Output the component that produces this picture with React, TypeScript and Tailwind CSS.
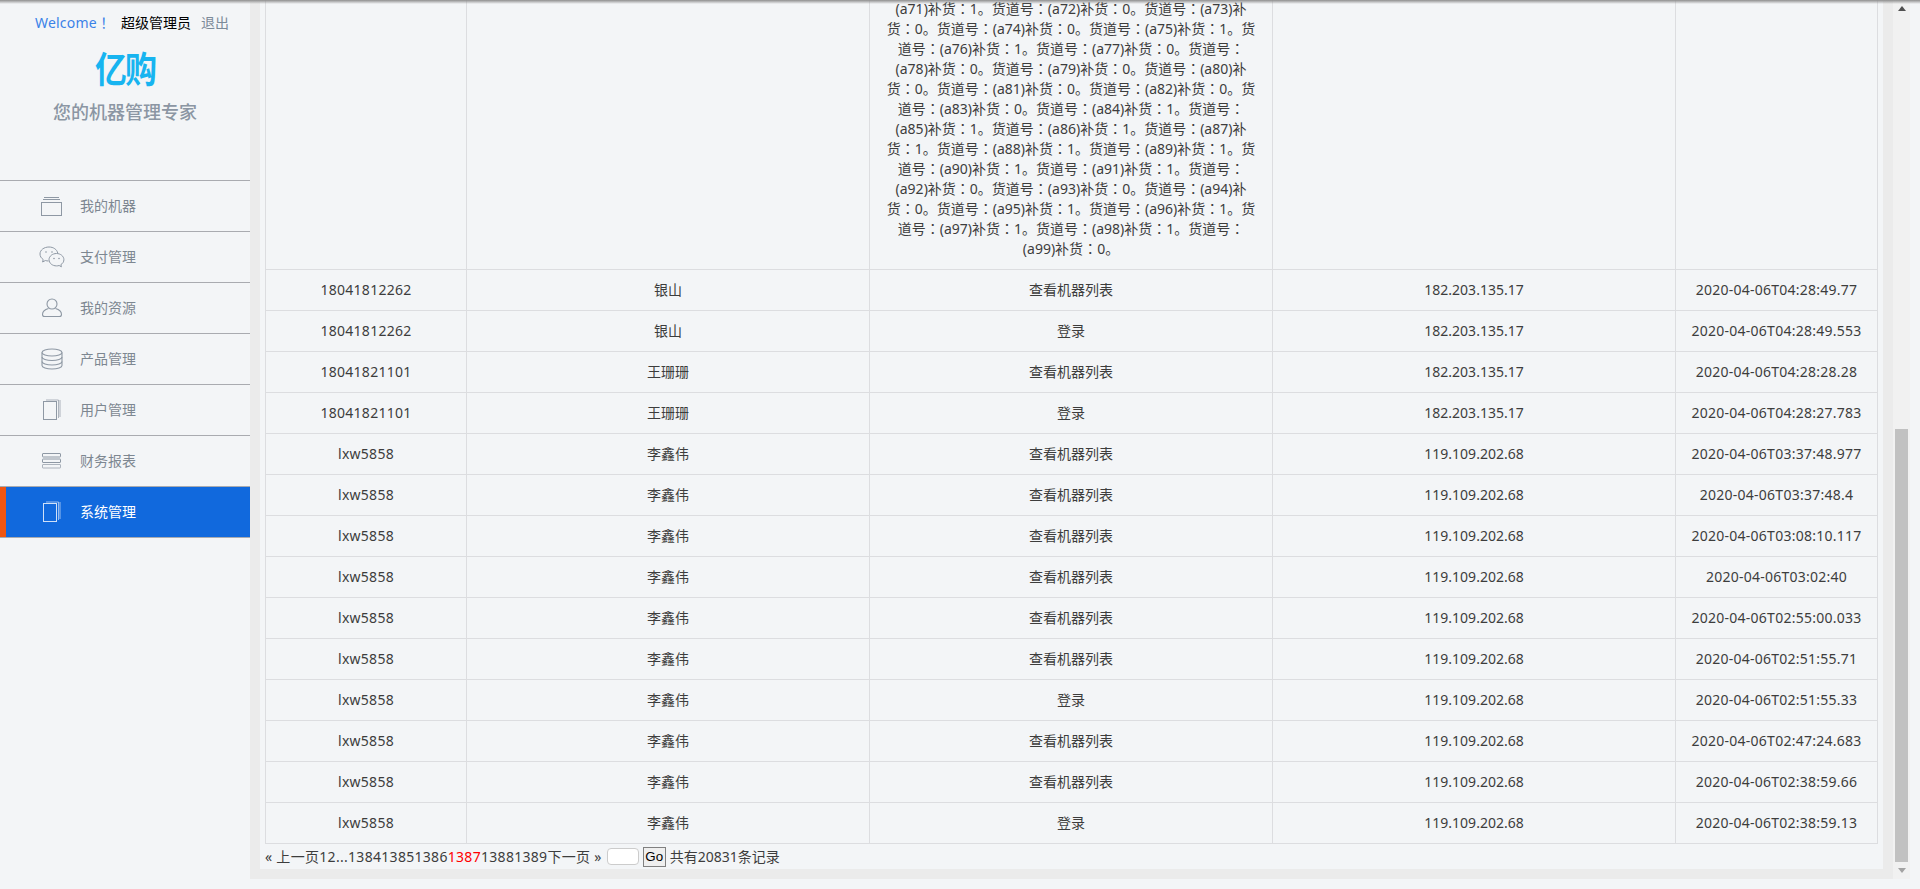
import React from "react";

const font = { fontFamily: '"Noto Sans", "Noto Sans CJK SC", sans-serif' };
const tc = { fontFamily: '"Noto Sans CJK TC", sans-serif' };

const bigLines = [
  "(a71)补货：1。货道号：(a72)补货：0。货道号：(a73)补",
  "货：0。货道号：(a74)补货：0。货道号：(a75)补货：1。货",
  "道号：(a76)补货：1。货道号：(a77)补货：0。货道号：",
  "(a78)补货：0。货道号：(a79)补货：0。货道号：(a80)补",
  "货：0。货道号：(a81)补货：0。货道号：(a82)补货：0。货",
  "道号：(a83)补货：0。货道号：(a84)补货：1。货道号：",
  "(a85)补货：1。货道号：(a86)补货：1。货道号：(a87)补",
  "货：1。货道号：(a88)补货：1。货道号：(a89)补货：1。货",
  "道号：(a90)补货：1。货道号：(a91)补货：1。货道号：",
  "(a92)补货：0。货道号：(a93)补货：0。货道号：(a94)补",
  "货：0。货道号：(a95)补货：1。货道号：(a96)补货：1。货",
  "道号：(a97)补货：1。货道号：(a98)补货：1。货道号：",
  "(a99)补货：0。",
];

const rows = [
  ["18041812262", "银山", "查看机器列表", "182.203.135.17", "2020-04-06T04:28:49.77"],
  ["18041812262", "银山", "登录", "182.203.135.17", "2020-04-06T04:28:49.553"],
  ["18041821101", "王珊珊", "查看机器列表", "182.203.135.17", "2020-04-06T04:28:28.28"],
  ["18041821101", "王珊珊", "登录", "182.203.135.17", "2020-04-06T04:28:27.783"],
  ["lxw5858", "李鑫伟", "查看机器列表", "119.109.202.68", "2020-04-06T03:37:48.977"],
  ["lxw5858", "李鑫伟", "查看机器列表", "119.109.202.68", "2020-04-06T03:37:48.4"],
  ["lxw5858", "李鑫伟", "查看机器列表", "119.109.202.68", "2020-04-06T03:08:10.117"],
  ["lxw5858", "李鑫伟", "查看机器列表", "119.109.202.68", "2020-04-06T03:02:40"],
  ["lxw5858", "李鑫伟", "查看机器列表", "119.109.202.68", "2020-04-06T02:55:00.033"],
  ["lxw5858", "李鑫伟", "查看机器列表", "119.109.202.68", "2020-04-06T02:51:55.71"],
  ["lxw5858", "李鑫伟", "登录", "119.109.202.68", "2020-04-06T02:51:55.33"],
  ["lxw5858", "李鑫伟", "查看机器列表", "119.109.202.68", "2020-04-06T02:47:24.683"],
  ["lxw5858", "李鑫伟", "查看机器列表", "119.109.202.68", "2020-04-06T02:38:59.66"],
  ["lxw5858", "李鑫伟", "登录", "119.109.202.68", "2020-04-06T02:38:59.13"],
];

type IconProps = { c: string };

const IconMachine = ({ c }: IconProps) => (
  <svg width="22" height="20" viewBox="0 0 22 20" fill="none" stroke={c} strokeWidth="1">
    <rect x="0.5" y="6.5" width="20" height="13" />
    <path d="M2 3.5h17M3 1.500h15" />
  </svg>
);
const IconWechat = ({ c }: IconProps) => (
  <svg width="26" height="22" viewBox="0 0 26 22" fill="none" stroke={c} strokeWidth="1">
    <path d="M10 1C5 1 1 4 1 8c0 2.300 1.300 4.200 3.200 5.500L3.600 16l2.800-1.500c1 .3 2 .5 3 .5" />
    <path d="M10 1c4.400 0 8 2.500 8.700 6" />
    <path d="M17.500 7.500c-4 0-7.500 2.700-7.500 6.200s3.500 6.200 7.500 6.200c1 0 1.800-.1 2.600-.4l2.300 1.300-.5-2.200c1.900-1.100 3-2.900 3-4.900 0-3.500-3.400-6.200-7.400-6.200z" />
    <circle cx="7" cy="6" r="0.8" fill={c} stroke="none" />
    <circle cx="13" cy="6" r="0.8" fill={c} stroke="none" />
    <circle cx="15" cy="12.500" r="0.8" fill={c} stroke="none" />
    <circle cx="20" cy="12.500" r="0.8" fill={c} stroke="none" />
  </svg>
);
const IconUser = ({ c }: IconProps) => (
  <svg width="22" height="20" viewBox="0 0 22 20" fill="none" stroke={c} strokeWidth="1.100">
    <circle cx="11" cy="6" r="5" />
    <path d="M7.500 10.500C4 11.500 1.500 13 1.500 16.500c0 1.500.5 2 2 2h15c1.500 0 2-.5 2-2 0-3.500-2.500-5-6-6" />
  </svg>
);
const IconDb = ({ c }: IconProps) => (
  <svg width="22" height="22" viewBox="0 0 22 22" fill="none" stroke={c} strokeWidth="1.100">
    <ellipse cx="11" cy="4.500" rx="10" ry="3.500" />
    <path d="M1 4.500v13c0 2 4.500 3.500 10 3.500s10-1.500 10-3.500v-13" />
    <path d="M1 9c0 2 4.500 3.500 10 3.500S21 11 21 9M1 13.500c0 2 4.500 3.500 10 3.500s10-1.500 10-3.500" />
  </svg>
);
const IconPages = ({ c }: IconProps) => (
  <svg width="18" height="22" viewBox="0 0 18 22" fill="none" stroke={c} strokeWidth="1">
    <rect x="0.500" y="2.500" width="13" height="18" />
    <path d="M3 1h12.500v18M17 1v17" opacity="0.7" />
  </svg>
);
const IconList = ({ c }: IconProps) => (
  <svg width="20" height="16" viewBox="0 0 20 16" fill="none" stroke={c} strokeWidth="1">
    <rect x="0.500" y="0.500" width="18" height="3.500" rx="0.500" />
    <rect x="0.500" y="6" width="18" height="3.500" rx="0.500" />
    <rect x="0.500" y="11.500" width="18" height="3.500" rx="0.500" opacity="0.7" />
  </svg>
);

const nav = [
  { label: "我的机器", Icon: IconMachine },
  { label: "支付管理", Icon: IconWechat },
  { label: "我的资源", Icon: IconUser },
  { label: "产品管理", Icon: IconDb },
  { label: "用户管理", Icon: IconPages },
  { label: "财务报表", Icon: IconList },
  { label: "系统管理", Icon: IconPages, active: true },
];

function Line({ text }: { text: string }) {
  const parts = text.split("：");
  return (
    <div className="h-[20px] whitespace-nowrap">
      {parts.map((p, i) => (
        <React.Fragment key={i}>
          {p}
          {i < parts.length - 1 && <span className="leading-[0]" style={tc}>：</span>}
        </React.Fragment>
      ))}
    </div>
  );
}

const cell = "border border-[#dcdde0] p-[10px] whitespace-nowrap";
const cellWide = "border border-[#dcdde0] p-[10px] whitespace-nowrap tracking-[0.25px]";

export default function App() {
  return (
    <div
      className="relative flex h-[889px] w-[1920px] overflow-hidden bg-[#f3f5f7] text-[14px] leading-[20px] text-[#3d3d3d]"
      style={font}
    >
      <div className="pointer-events-none absolute left-0 right-0 top-0 z-10 h-[4px] bg-gradient-to-b from-[#8f8f8f] to-transparent" />

      <aside className="flex w-[250px] shrink-0 flex-col">
        <div className="flex h-[180px] flex-col items-center">
          <div className="mt-[13px] flex h-[20px] w-full items-center pl-[35px]">
            <span className="tracking-[0.2px] text-[#3b82e8]">
              Welcome<span className="leading-[0]" style={tc}>！</span>
            </span>
            <span className="ml-[10px] text-black">超级管理员</span>
            <span className="ml-[10px] text-[#7c8a99]">退出</span>
          </div>
          <div className="mt-[17px] h-[40px] origin-center scale-y-[1.12] text-[32px] font-bold leading-[40px] tracking-[-2px] text-[#17b4f0]">亿购</div>
          <div className="mt-[10px] h-[24px] text-[18px] font-medium leading-[24px] text-[#8b96a3]">您的机器管理专家</div>
        </div>
        {nav.map(({ label, Icon, active }) => (
          <div
            key={label}
            className={
              active
                ? "flex h-[51px] items-center border-t border-[#a9abb0] bg-[#1169dd] text-white"
                : "flex h-[51px] items-center border-t border-[#a9abb0] text-[#7d8791]"
            }
          >
            <div className={active ? "h-full w-[6px] bg-[#ef5612]" : "h-full w-[6px]"} />
            <div className="flex w-[74px] justify-center pl-[18px]">
              <Icon c={active ? "#cfe0f8" : "#8e98a4"} />
            </div>
            <span>{label}</span>
          </div>
        ))}
        <div className="border-t border-[#a9abb0]" />
      </aside>

      <main className="flex min-w-0 flex-1 pb-[10px] pr-[10px]">
        <div className="flex min-w-0 flex-1 flex-col bg-[#ebebeb] px-[10px] pb-[10px]">
          <div className="flex min-h-0 flex-1 flex-col justify-end overflow-hidden bg-[#f3f5f7] pl-[5px] pr-[6px]">
            <table className="w-[1612px] shrink-0 table-fixed border-collapse text-center">
              <colgroup>
                <col className="w-[201px]" />
                <col className="w-[403px]" />
                <col className="w-[403px]" />
                <col className="w-[403px]" />
                <col className="w-[202px]" />
              </colgroup>
              <tbody>
                <tr>
                  <td className={cell} />
                  <td className={cell} />
                  <td className={cell}>
                    {bigLines.map((l) => (
                      <Line key={l} text={l} />
                    ))}
                  </td>
                  <td className={cell} />
                  <td className={cell} />
                </tr>
                {rows.map((r, i) => (
                  <tr key={i}>
                    {r.map((c, j) => (
                      <td key={j} className={j === 0 || j === 4 ? cellWide : cell}>{c}</td>
                    ))}
                  </tr>
                ))}
              </tbody>
            </table>
            <div className="flex h-[25px] shrink-0 items-center whitespace-nowrap">
              <span className="tracking-[0.3px]">« 上一页12...138413851386</span>
              <span className="tracking-[0.3px] text-[#f00]">1387</span>
              <span className="tracking-[0.3px]">13881389下一页 »</span>
              <input className="ml-[5px] h-[17px] w-[32px] rounded-[4px] border border-[#ccc] bg-white" />
              <button
                className="ml-[4px] flex h-[20px] w-[23px] items-center justify-center border border-[#808080] bg-[#efefef] text-[13.33px] text-black"
                style={{ fontFamily: '"Liberation Sans", sans-serif' }}
              >
                Go
              </button>
              <span className="ml-[4px]">共有20831条记录</span>
            </div>
          </div>
        </div>
        <div className="flex w-[17px] shrink-0 flex-col items-center bg-[#f1f1f1]">
          <div className="flex h-[17px] w-full items-center justify-center">
            <svg width="8" height="5" viewBox="0 0 8 5"><path d="M4 0l4 5H0z" fill="#505050" /></svg>
          </div>
          <div className="mt-[412px] h-[433px] w-[13px] bg-[#c1c1c1]" />
          <div className="flex h-[17px] w-full items-center justify-center">
            <svg width="8" height="5" viewBox="0 0 8 5"><path d="M4 5l4-5H0z" fill="#a3a3a3" /></svg>
          </div>
        </div>
      </main>
    </div>
  );
}
